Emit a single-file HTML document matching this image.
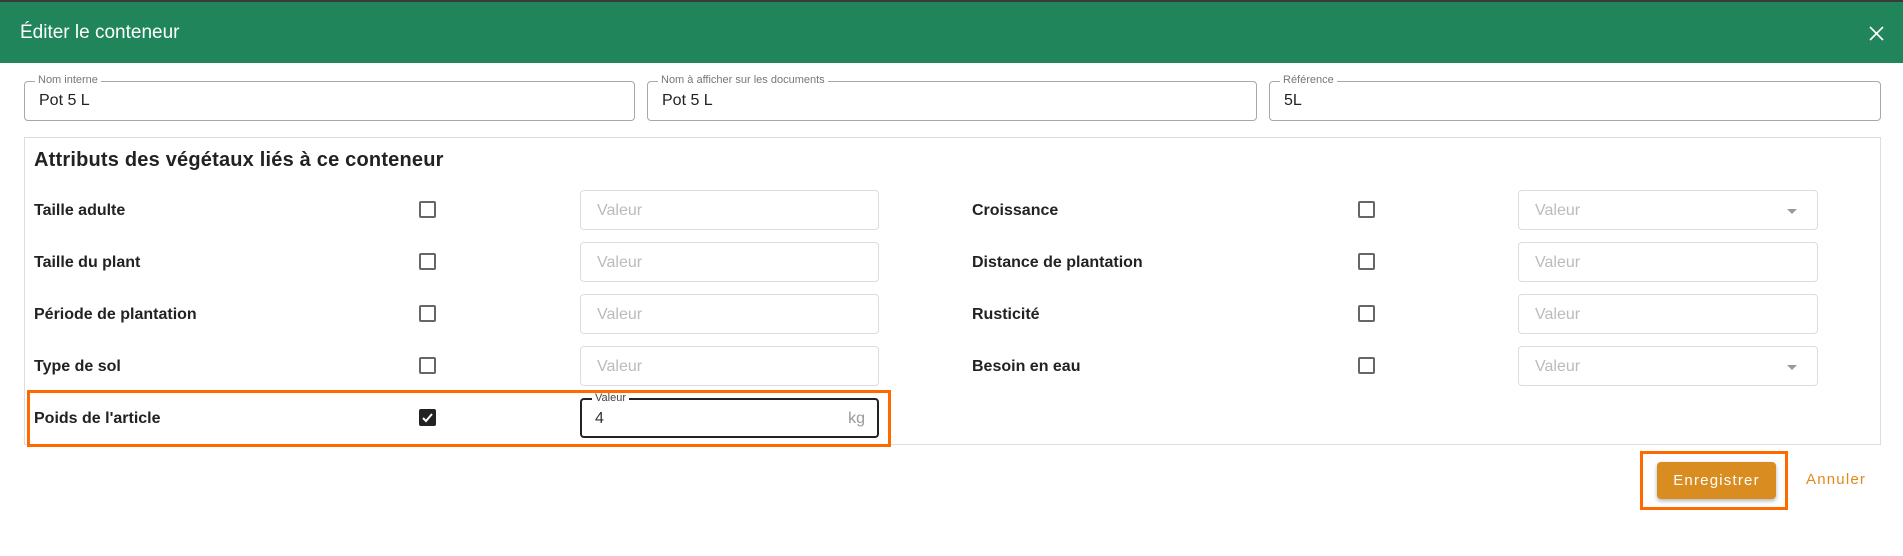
<!DOCTYPE html>
<html><head><meta charset="utf-8"><style>
*{box-sizing:border-box;margin:0;padding:0}
body{width:1903px;height:556px;background:#fff;font-family:"Liberation Sans",sans-serif;position:relative;overflow:hidden;color:#222}
.abs{position:absolute}
.hdr{left:0;top:0;width:1903px;height:63px;background:#20855a;border-top:2px solid #3a3a3a}
.title{left:20px;top:22px;color:#fff;font-size:19px}
.fld{height:40px;top:81px;border:1px solid #a8a8a8;border-radius:4px}
.fld .lb{position:absolute;top:-8px;left:10px;background:#fff;padding:0 3px;font-size:11px;color:#777}
.fld .v{position:absolute;left:14px;top:10px;font-size:16px;color:#222}
.panel{left:24px;top:137px;width:1857px;height:308px;border:1px solid #ddd}
.pt{left:34px;top:149px;font-size:20px;font-weight:bold;color:#222;letter-spacing:.2px}
.lab{font-size:16px;font-weight:bold;color:#222}
.cb{width:17px;height:17px;border:2px solid #666;border-radius:2px}
.inp{height:40px;border:1px solid #ddd;border-radius:4px}
.inp span{position:absolute;left:16px;top:11px;font-size:16px;color:#bbb}
.arr{position:absolute;right:20px;top:18px;width:0;height:0;border-left:5px solid transparent;border-right:5px solid transparent;border-top:5px solid #999}
</style></head><body>
<div class="abs hdr"></div>
<div class="abs title">Éditer le conteneur</div>
<svg class="abs" style="left:1869px;top:26px" width="15" height="15" viewBox="0 0 15 15"><path d="M1 1L14 14M14 1L1 14" stroke="#fff" stroke-width="1.6"/></svg>

<div class="abs fld" style="left:24px;width:611px"><div class="lb">Nom interne</div><div class="v">Pot 5 L</div></div>
<div class="abs fld" style="left:647px;width:610px"><div class="lb">Nom à afficher sur les documents</div><div class="v">Pot 5 L</div></div>
<div class="abs fld" style="left:1269px;width:612px"><div class="lb">Référence</div><div class="v">5L</div></div>

<div class="abs panel"></div>
<div class="abs pt">Attributs des végétaux liés à ce conteneur</div>

<div class="abs lab" style="left:34px;top:202px">Taille adulte</div>
<div class="abs lab" style="left:34px;top:254px">Taille du plant</div>
<div class="abs lab" style="left:34px;top:306px">Période de plantation</div>
<div class="abs lab" style="left:34px;top:358px">Type de sol</div>
<div class="abs lab" style="left:34px;top:410px">Poids de l'article</div>
<div class="abs cb" style="left:419px;top:201px"></div>
<div class="abs cb" style="left:419px;top:253px"></div>
<div class="abs cb" style="left:419px;top:305px"></div>
<div class="abs cb" style="left:419px;top:357px"></div>
<div class="abs cb" style="left:419px;top:409px;background:#222;border-color:#222"><svg width="13" height="13" viewBox="0 0 13 13" style="position:absolute;left:0;top:0"><path d="M2 7L5 10L11 3" stroke="#fff" stroke-width="2" fill="none"/></svg></div>
<div class="abs inp" style="left:580px;top:190px;width:299px"><span>Valeur</span></div>
<div class="abs inp" style="left:580px;top:242px;width:299px"><span>Valeur</span></div>
<div class="abs inp" style="left:580px;top:294px;width:299px"><span>Valeur</span></div>
<div class="abs inp" style="left:580px;top:346px;width:299px"><span>Valeur</span></div>
<div class="abs inp" style="left:580px;top:398px;width:299px;border:2px solid #222"><div style="position:absolute;top:-8px;left:10px;background:#fff;padding:0 3px;font-size:11px;color:#444">Valeur</div><span style="color:#333;top:10px;left:13px">4</span><span style="left:auto;right:12px;top:10px;color:#999">kg</span></div>
<div class="abs" style="left:27px;top:390px;width:864px;height:57px;border:3px solid #ff6a00"></div>

<div class="abs lab" style="left:972px;top:202px">Croissance</div>
<div class="abs lab" style="left:972px;top:254px">Distance de plantation</div>
<div class="abs lab" style="left:972px;top:306px">Rusticité</div>
<div class="abs lab" style="left:972px;top:358px">Besoin en eau</div>
<div class="abs cb" style="left:1358px;top:201px"></div>
<div class="abs cb" style="left:1358px;top:253px"></div>
<div class="abs cb" style="left:1358px;top:305px"></div>
<div class="abs cb" style="left:1358px;top:357px"></div>
<div class="abs inp" style="left:1518px;top:190px;width:300px"><span>Valeur</span><div class="arr"></div></div>
<div class="abs inp" style="left:1518px;top:242px;width:300px"><span>Valeur</span></div>
<div class="abs inp" style="left:1518px;top:294px;width:300px"><span>Valeur</span></div>
<div class="abs inp" style="left:1518px;top:346px;width:300px"><span>Valeur</span><div class="arr"></div></div>

<div class="abs" style="left:1657px;top:462px;width:119px;height:37px;background:#d98c1f;border-radius:4px;box-shadow:0 2px 4px rgba(0,0,0,.3);color:#fff;font-size:15px;letter-spacing:1.2px;text-align:center;line-height:37px">Enregistrer</div>
<div class="abs" style="left:1640px;top:451px;width:148px;height:59px;border:3px solid #ff6a00"></div>
<div class="abs" style="left:1806px;top:471px;color:#e08a1a;font-size:15px;letter-spacing:1.2px">Annuler</div>
</body></html>
